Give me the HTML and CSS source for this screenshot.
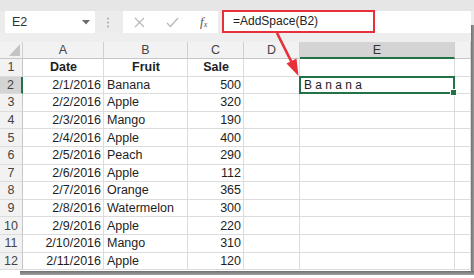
FILE: index.html
```html
<!DOCTYPE html>
<html>
<head>
<meta charset="utf-8">
<link rel="stylesheet" href="styles.css">
</head>
<body>
<div class="window">
  <div class="band"></div>
  <div class="fbar">
    <div class="namebox">
      <span class="ref">E2</span>
      <svg class="dd" width="8" height="5" viewBox="0 0 8 5"><path d="M0 0H8L4 4.5Z" fill="#6b6b6b"/></svg>
    </div>
    <svg class="dots" width="4" height="11" viewBox="0 0 4 11"><circle cx="2" cy="1.5" r="1" fill="#a8a8a8"/><circle cx="2" cy="5.5" r="1" fill="#a8a8a8"/><circle cx="2" cy="9.5" r="1" fill="#a8a8a8"/></svg>
    <div class="fbtns">
      <svg class="btn" width="11" height="11" viewBox="0 0 11 11"><path d="M1 1L10 10M10 1L1 10" stroke="#b8b8b8" stroke-width="1.2" fill="none"/></svg>
      <svg class="btn" width="13" height="11" viewBox="0 0 13 11"><path d="M1 6L4.5 9.5L12 1" stroke="#b8b8b8" stroke-width="1.3" fill="none"/></svg>
      <span class="fx">f<sub>x</sub></span>
    </div>
    <div class="finput"><div class="redbox">=AddSpace(B2)</div></div>
  </div>
  <div class="gap"></div>
  <div class="sheet">
    <div class="h corner"><svg width="11" height="12" viewBox="0 0 11 12"><path d="M11 0V12H0Z" fill="#c4c4c4"/></svg></div>
    <div class="h">A</div>
    <div class="h">B</div>
    <div class="h">C</div>
    <div class="h">D</div>
    <div class="h hsel">E</div>
    <div class="h"></div>

    <div class="rh">1</div><div class="c b ctr">Date</div><div class="c b ctr">Fruit</div><div class="c b ctr">Sale</div><div class="c"></div><div class="c"></div><div class="c"></div>
    <div class="rh rsel">2</div><div class="c r">2/1/2016</div><div class="c">Banana</div><div class="c r">500</div><div class="c"></div><div class="c sel">B a n a n a</div><div class="c"></div>
    <div class="rh">3</div><div class="c r">2/2/2016</div><div class="c">Apple</div><div class="c r">320</div><div class="c"></div><div class="c"></div><div class="c"></div>
    <div class="rh">4</div><div class="c r">2/3/2016</div><div class="c">Mango</div><div class="c r">190</div><div class="c"></div><div class="c"></div><div class="c"></div>
    <div class="rh">5</div><div class="c r">2/4/2016</div><div class="c">Apple</div><div class="c r">400</div><div class="c"></div><div class="c"></div><div class="c"></div>
    <div class="rh">6</div><div class="c r">2/5/2016</div><div class="c">Peach</div><div class="c r">290</div><div class="c"></div><div class="c"></div><div class="c"></div>
    <div class="rh">7</div><div class="c r">2/6/2016</div><div class="c">Apple</div><div class="c r">112</div><div class="c"></div><div class="c"></div><div class="c"></div>
    <div class="rh">8</div><div class="c r">2/7/2016</div><div class="c">Orange</div><div class="c r">365</div><div class="c"></div><div class="c"></div><div class="c"></div>
    <div class="rh">9</div><div class="c r">2/8/2016</div><div class="c">Watermelon</div><div class="c r">300</div><div class="c"></div><div class="c"></div><div class="c"></div>
    <div class="rh">10</div><div class="c r">2/9/2016</div><div class="c">Apple</div><div class="c r">220</div><div class="c"></div><div class="c"></div><div class="c"></div>
    <div class="rh">11</div><div class="c r">2/10/2016</div><div class="c">Mango</div><div class="c r">310</div><div class="c"></div><div class="c"></div><div class="c"></div>
    <div class="rh">12</div><div class="c r">2/11/2016</div><div class="c">Apple</div><div class="c r">120</div><div class="c"></div><div class="c"></div><div class="c"></div>
  </div>
  <svg class="arrow" width="474" height="278" viewBox="0 0 474 278">
    <path d="M277 33L292 63" stroke="#e8303a" stroke-width="2.6" fill="none"/>
    <path d="M298.5 76L286.5 63.5L296.5 58.5Z" fill="#e8303a"/>
  </svg>
</div>
</body>
</html>
```
FILE: styles.css
```css
html, body {
  margin: 0;
  padding: 0;
  background: #ffffff;
}
body {
  width: 474px;
  height: 278px;
  overflow: hidden;
  font-family: "Liberation Sans", Arial, sans-serif;
  color: #222;
}
.window {
  position: relative;
  width: 474px;
  height: 278px;
}
.window::before {
  content: "";
  position: absolute;
  left: 471px;
  top: 25px;
  width: 3px;
  height: 250px;
  background: linear-gradient(to right, #6f6f6f, #9a9a9a);
}
.window::after {
  content: "";
  position: absolute;
  left: 20px;
  top: 271px;
  width: 454px;
  height: 4px;
  background: linear-gradient(to bottom, #6f6f6f, #a0a0a0);
}
.band {
  height: 11px;
  background: #e6e6e6;
}
.fbar {
  height: 22px;
  display: flex;
  align-items: stretch;
  background: #ececec;
}
.namebox {
  margin-left: 5px;
  width: 90px;
  background: #fff;
  display: flex;
  align-items: center;
  justify-content: space-between;
  padding: 0 5px 0 7px;
  box-sizing: border-box;
}
.ref {
  font-size: 12.5px;
  color: #333;
}
.dd {
  margin-top: 1px;
}
.dots {
  margin-left: 11px;
  align-self: center;
}
.fbtns {
  margin-left: 13px;
  width: 95px;
  background: #fff;
  display: flex;
  align-items: center;
  padding-left: 11px;
  box-sizing: border-box;
}
.btn:first-child {
  margin-right: 21px;
}
.fx {
  margin-left: 21px;
  font-family: "Liberation Serif", serif;
  font-style: italic;
  font-size: 13px;
  color: #555;
}
.fx sub {
  font-size: 8px;
  vertical-align: -1px;
}
.finput {
  flex: 1;
  margin-left: 4px;
  margin-right: 3px;
  background: #fff;
  display: flex;
}
.redbox {
  width: 153px;
  height: 23px;
  margin-top: -1px;
  box-sizing: border-box;
  border: 2px solid #e8303a;
  font-size: 12px;
  color: #222;
  padding-left: 9px;
  line-height: 19px;
}
.gap {
  height: 9px;
  background: #eeeeee;
  width: 471px;
}
.sheet {
  width: 471px;
  display: grid;
  grid-template-columns: 23px 81px 84px 56px 56px 155px 16px;
  grid-template-rows: 17px;
  grid-auto-rows: 17.6px;
  background: #fff;
}
.h, .rh, .c {
  box-sizing: border-box;
  font-size: 12.5px;
  white-space: nowrap;
  overflow: visible;
}
.h {
  background: #f2f2f2;
  border-right: 1px solid #d0d0d0;
  border-bottom: 1px solid #c6c6c6;
  color: #444;
  display: flex;
  align-items: center;
  justify-content: center;
}
.corner {
  justify-content: flex-end;
  align-items: flex-end;
  padding: 0 2px 2px 0;
}
.hsel {
  background: #d4d4d4;
  border-bottom: 2px solid #217346;
  color: #333;
}
.rh {
  background: #f2f2f2;
  border-right: 1px solid #c6c6c6;
  border-bottom: 1px solid #dcdcdc;
  color: #444;
  display: flex;
  align-items: center;
  justify-content: center;
}
.rsel {
  background: #d4d4d4;
  border-right: 2px solid #217346;
}
.c {
  border-right: 1px solid #dcdcdc;
  border-bottom: 1px solid #dcdcdc;
  display: flex;
  align-items: center;
  padding: 0 2px 0 3px;
  color: #1e1e1e;
}
.r {
  justify-content: flex-end;
}
.ctr {
  justify-content: center;
}
.b {
  font-weight: bold;
}
.sel {
  position: relative;
  padding-left: 4px;
  font-size: 12px;
}
.sel::after {
  content: "";
  position: absolute;
  left: -1px;
  top: -1px;
  right: -1px;
  bottom: -1px;
  border: 2px solid #217346;
}
.sel::before {
  content: "";
  position: absolute;
  right: -3px;
  bottom: -3px;
  width: 5px;
  height: 5px;
  background: #217346;
  border: 1px solid #fff;
  z-index: 2;
}
.arrow {
  position: absolute;
  left: 0;
  top: 0;
  pointer-events: none;
}
```
